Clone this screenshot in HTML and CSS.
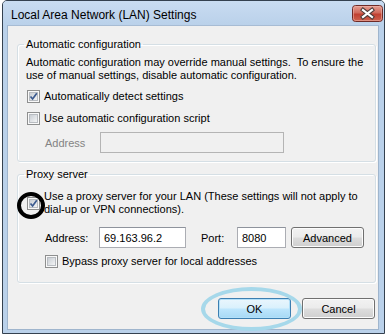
FILE: index.html
```html
<!DOCTYPE html>
<html>
<head>
<meta charset="utf-8">
<link rel="stylesheet" href="styles.css">
</head>
<body>
<div class="window">
  <div class="titlebar">
    <span class="title">Local Area Network (LAN) Settings</span>
    <svg class="close" width="31" height="17" viewBox="0 0 31 17">
      <defs>
        <linearGradient id="cg" x1="0" y1="0" x2="0" y2="1">
          <stop offset="0" stop-color="#e6a195"/>
          <stop offset="0.45" stop-color="#d06a5c"/>
          <stop offset="0.55" stop-color="#c04032"/>
          <stop offset="1" stop-color="#cf6450"/>
        </linearGradient>
      </defs>
      <rect x="0.5" y="0.5" width="30" height="16" rx="3" fill="url(#cg)" stroke="#6e2a26"/>
      <rect x="1.5" y="1.5" width="28" height="14" rx="2" fill="none" stroke="#f0b8ae" stroke-opacity="0.55"/>
      <path d="M11 5 L20 12 M20 5 L11 12" stroke="#4b3b3a" stroke-width="4.2" stroke-linecap="square"/>
      <path d="M11 5 L20 12 M20 5 L11 12" stroke="#ffffff" stroke-width="2.2" stroke-linecap="square"/>
    </svg>
  </div>
  <div class="content">
    <fieldset class="group auto">
      <legend>Automatic configuration</legend>
      <p class="desc">Automatic configuration may override manual settings.&nbsp; To ensure the<br>use of manual settings, disable automatic configuration.</p>
      <div class="check row1"><span class="box checked"><svg class="tick" width="13" height="13" viewBox="0 0 13 13"><path d="M3.5 6.5 L5.6 9 L9.8 3.3" fill="none" stroke="#3b5a8f" stroke-width="1.7"/></svg></span><span>Automatically detect settings</span></div>
      <div class="check row2"><span class="box"></span><span>Use automatic configuration script</span></div>
      <div class="addr-row"><span class="dim">Address</span><span class="input disabled"></span></div>
    </fieldset>
    <fieldset class="group proxy">
      <legend>Proxy server</legend>
      <div class="check multi"><span class="box checked"><svg class="tick" width="13" height="13" viewBox="0 0 13 13"><path d="M3.5 6.5 L5.6 9 L9.8 3.3" fill="none" stroke="#3b5a8f" stroke-width="1.7"/></svg></span><span>Use a proxy server for your LAN (These settings will not apply to<br>dial-up or VPN connections).</span></div>
      <div class="proxy-row">
        <span class="lbl-addr">Address:</span>
        <span class="input addr">69.163.96.2</span>
        <span class="lbl-port">Port:</span>
        <span class="input port">8080</span>
        <span class="btn adv">Advanced</span>
      </div>
      <div class="check bypass"><span class="box"></span><span>Bypass proxy server for local addresses</span></div>
    </fieldset>
    <div class="buttons">
      <span class="btn ok">OK</span>
      <span class="btn cancel">Cancel</span>
    </div>
  </div>
  <span class="mark-black"></span>
  <span class="mark-blue"></span>
</div>
</body>
</html>
```
FILE: styles.css
```css
html, body {
  margin: 0;
  padding: 0;
  background: #ffffff;
}
body {
  font-family: "Liberation Sans", Arial, sans-serif;
  font-size: 11px;
  color: #000;
}
.window {
  position: relative;
  box-sizing: border-box;
  width: 383px;
  height: 334px;
  margin-left: 2px;
  border: 1px solid #34414f;
  border-radius: 5px 5px 0 0;
  background: #bad1ea;
  padding: 0 5px 3px 4px;
  display: flex;
  flex-direction: column;
}
.titlebar {
  height: 24px;
  flex: none;
  display: flex;
  justify-content: space-between;
  align-items: flex-start;
  background: linear-gradient(#c9dcf1, #bad1ea);
  margin: 0 -5px 0 -4px;
  padding: 0 1px 0 8px;
  border-radius: 4px 4px 0 0;
}
.title {
  font-size: 12px;
  line-height: 14px;
  margin-top: 7px;
  color: #000;
}
.close {
  margin-top: 4px;
  display: block;
}
.content {
  flex: 1;
  background: #f0f0f0;
  border: 1px solid #9fb5cd;
  border-top-color: #a7bcd4;
  padding: 11px 2px 0 9px;
  display: flex;
  flex-direction: column;
}
.group {
  margin: 0;
  border: 1px solid #d5dfe5;
  border-radius: 3px;
  padding: 0 8px 8px 8px;
  box-shadow: inset 1px 1px 0 #fff, 1px 1px 0 #fff;
}
.group legend {
  padding: 0 2px;
  margin-left: -2px;
  line-height: 15px;
}
.desc {
  margin: 4px 0 0 0;
  line-height: 13px;
}
.check {
  display: flex;
  align-items: center;
  line-height: 13px;
}
.check .box {
  margin: 0 4px 0 1px;
}
.row1 { margin-top: 8px; }
.row2 { margin-top: 9px; }
.box {
  position: relative;
  flex: none;
  width: 13px;
  height: 13px;
  box-sizing: border-box;
  border: 1px solid #8e8f8f;
  background: #f9f9f9;
  display: flex;
  align-items: center;
  justify-content: center;
}
.box::before {
  content: "";
  width: 9px;
  height: 9px;
  box-sizing: border-box;
  border: 1px solid #b8bcc1;
  background: linear-gradient(135deg, #c9ced4, #f3f4f5);
}
.tick {
  position: absolute;
  left: -1px;
  top: -1px;
}
.addr-row {
  margin-top: 7px;
  display: flex;
  align-items: center;
}
.dim {
  color: #838383;
  margin-left: 19px;
  width: 55px;
}
.input {
  box-sizing: border-box;
  height: 21px;
  border: 1px solid #abadb3;
  border-top-color: #8e939c;
  background: #fff;
  display: flex;
  align-items: center;
  padding-left: 4px;
}
.input.disabled {
  width: 184px;
  background: #f0f0f0;
  border-color: #b4b4b4;
}
.proxy {
  margin-top: 5px;
  padding-bottom: 14px;
}
.multi {
  margin-top: 8px;
}
.multi .box { align-self: center; }
.proxy-row {
  margin-top: 11px;
  display: flex;
  align-items: center;
}
.lbl-addr {
  margin-left: 19px;
  width: 54px;
}
.input.addr { width: 87px; }
.lbl-port {
  margin-left: 15px;
  width: 36px;
}
.input.port { width: 49px; }
.btn {
  box-sizing: border-box;
  height: 21px;
  border: 1px solid #707070;
  border-radius: 3px;
  background: linear-gradient(#f2f2f2 0%, #ebebeb 49%, #dddddd 51%, #cfcfcf 100%);
  box-shadow: inset 0 0 0 1px #fcfcfc;
  display: flex;
  align-items: center;
  justify-content: center;
}
.adv {
  width: 73px;
  margin-left: 5px;
}
.bypass {
  margin-top: 7px;
}
.bypass .box { margin-left: 19px; }
.buttons {
  margin-top: 15px;
  display: flex;
  justify-content: flex-end;
  gap: 11px;
  padding-right: 1px;
}
.buttons .btn { width: 73px; }
.ok {
  border-color: #3c7fb1;
  background: linear-gradient(#eaf6fd 0%, #d9f0fc 49%, #bee6fd 51%, #a7d9f5 100%);
  box-shadow: inset 0 0 0 1px #b3e0f9;
}
.mark-black {
  position: absolute;
  left: 14px;
  top: 191px;
  width: 28px;
  height: 27px;
  box-sizing: border-box;
  border: 4px solid #000;
  border-radius: 50%;
}
.mark-blue {
  position: absolute;
  left: 198px;
  top: 286px;
  width: 101px;
  height: 44px;
  box-sizing: border-box;
  border: 4px solid #a6d8ea;
  border-radius: 50%;
}
```
